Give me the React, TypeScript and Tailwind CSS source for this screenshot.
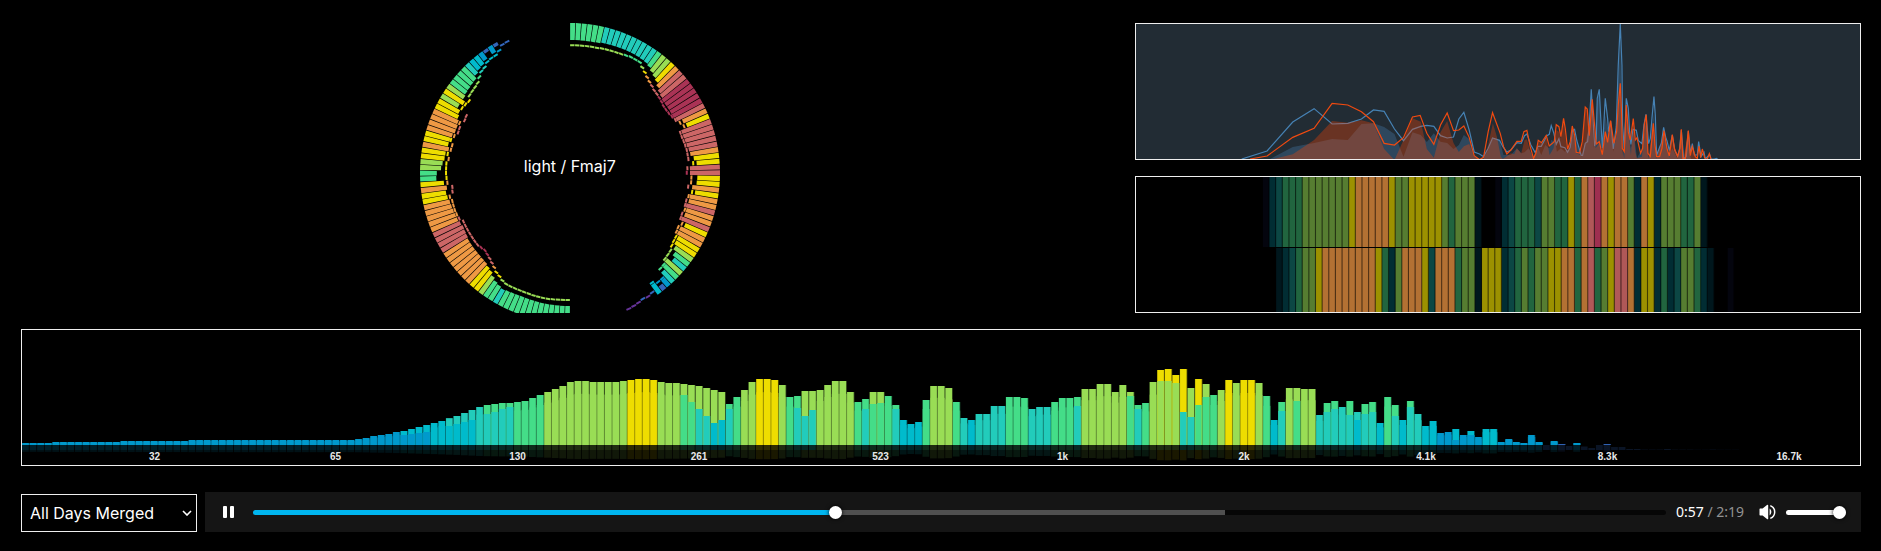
import { useState } from "react";

const PALETTE = [
  "#663399", "#3366bb", "#0099cc", "#00bbcc", "#22ccbb", "#44dd88",
  "#99dd55", "#eedd00", "#ee9944", "#cc6666", "#aa3355", "#881177",
];

/* ---------- radial analyser ---------- */

const RADIUS = 150;
const RADIAL_BANDS = 81;
const RADIAL_STEP = Math.PI / RADIAL_BANDS;

const RIGHT_BARS = [
  17, 17, 17, 17, 17, 16.8, 15.9, 15.8, 15.6, 15.4, 15.2, 15, 15, 15.2, 15.5, 15.9,
  17.5, 20, 22, 24, 27, 29.5, 31, 32.5, 32.5, 32.5, 32.5, 32.5, 31, 26, 24, 31,
  31, 30.5, 30, 29, 28.2, 25.4, 23, 30, 30, 22.6, 23, 27, 23.5, 28, 28, 29.5,
  28, 28, 29.5, 24, 27, 27, 24.5, 24, 21.5, 18.5, 15.5, 20.5, 18, 15, 9, 6,
  11.5,
];
const RIGHT_PEAKS = [
  21.2, 21.2, 21.2, 21, 21, 21, 20.5, 20.3, 20, 19.8, 19.5, 18.8, 18, 18, 18, 21,
  23.5, 26, 28, 29.5, 31, 31.6, 32.3, 33, 34, 34, 33.5, 32.5, 31, 28, 25.8, 31.5,
  31.5, 31, 30.5, 30, 30, 29.8, 25.4, 31.5, 32.2, 27.5, 27.5, 30, 25.4, 28.2, 29.5, 29.5,
  28.5, 29.8, 29.5, 26, 28, 27.5, 25.4, 25, 24, 22, 21.5, 21, 18, 17.5, 9, 8.8,
  12, 4, 2.8, 3.6, 2.4, 1.6, 1,
];
const LEFT_BARS = [
  17, 17, 17, 17, 17, 17.1, 17.2, 17.3, 17.4, 17.5, 17.3, 17, 16.6, 15.8, 17, 18.5,
  21, 24, 25.4, 27, 27.5, 27.8, 28, 28, 28.2, 28.4, 29.5, 30, 30.5, 29.5, 28.4, 28,
  27.5, 27, 26.5, 25.2, 24.5, 26, 23.5, 16.2, 16.8, 21, 22.2, 23.7, 24, 26.5, 25, 25.4,
  26.5, 28, 28, 27, 25, 23.5, 20, 23, 20, 18.8, 18.2, 17.6, 17, 14, 12, 11,
  8.8, 3.4, 8, 3.4,
];
const LEFT_PEAKS = [
  22, 22, 21.8, 21.5, 21.2, 21.2, 21.2, 21.2, 21.4, 21.4, 21.4, 21.2, 21, 21, 22, 24,
  25.4, 28, 30, 31.8, 33, 34, 33, 31.9, 31.9, 31.9, 31.9, 31.9, 31.9, 31.9, 29.2, 28.4,
  28, 28, 28, 26.5, 30, 30.5, 26, 25.4, 25, 25, 25, 26.8, 25.2, 27.6, 28, 25.4,
  27.5, 30, 29.8, 27.8, 31.2, 30.6, 23, 24, 25, 22, 21.5, 21, 20, 17, 14.2, 13.2,
  10.5, 9.8, 9.8, 7.5, 4, 3.4,
];

const paletteColor = (v: number) => PALETTE[Math.max(0, Math.min(11, Math.floor(v / 3.2)))];

function wedge(index: number, outer: number, inner: number, offset: number) {
  const a0 = offset + index * RADIAL_STEP + 0.001;
  const a1 = offset + (index + 1) * RADIAL_STEP - 0.0035;
  const pt = (r: number, a: number) => `${(r * Math.sin(a)).toFixed(2)} ${(-r * Math.cos(a)).toFixed(2)}`;
  return `M${pt(outer, a0)}L${pt(outer, a1)}L${pt(inner, a1)}L${pt(inner, a0)}Z`;
}

function RadialChannel({ bars, peaks, offset }: { bars: number[]; peaks: number[]; offset: number }) {
  return (
    <g>
      {bars.map((v, i) => (
        <path key={`b${i}`} d={wedge(i, RADIUS, RADIUS - v, offset)} fill={paletteColor(v)} />
      ))}
      {peaks.map((v, i) => (
        <path key={`p${i}`} d={wedge(i, RADIUS - v, RADIUS - v - 2, offset)} fill={paletteColor(v)} />
      ))}
    </g>
  );
}

function RadialAnalyser() {
  return (
    <div className="col-span-3 row-span-2 grid place-items-center">
      <svg viewBox="-150 -150 300 290" className="col-start-1 row-start-1 h-[290px] w-[300px]" aria-hidden="true">
        <RadialChannel bars={RIGHT_BARS} peaks={RIGHT_PEAKS} offset={0} />
        <RadialChannel bars={LEFT_BARS} peaks={LEFT_PEAKS} offset={Math.PI} />
      </svg>
      <h1 className="col-start-1 row-start-1 pb-1 text-base leading-6 text-white">light / Fmaj7</h1>
    </div>
  );
}

/* ---------- line graph ---------- */

const BLUE_LINE =
  "335,432 411,408 488,321 552,281 606,327 653,325 694,312 730,285 762,289 793,342 820,377 847,343 872,334 890,331 911,334 931,362 951,369 970,366 986,312 1001,292 1017,345 1032,411 1048,417 1060,425 1074,400 1087,369 1108,376 1118,395 1130,411 1142,405 1160,383 1173,385 1183,362 1190,357 1202,390 1215,413 1223,394 1233,394 1250,362 1257,358 1263,332 1271,355 1278,388 1286,371 1292,395 1304,398 1312,412 1320,397 1327,345 1333,343 1340,378 1353,421 1357,421 1365,385 1372,380 1377,330 1383,223 1393,393 1398,370 1401,250 1407,223 1416,400 1420,340 1425,250 1432,310 1435,350 1441,318 1449,402 1458,335 1464,150 1470,27 1475,150 1477,330 1482,400 1488,250 1494,280 1498,350 1502,388 1508,343 1518,346 1524,376 1535,386 1541,330 1547,298 1555,386 1560,370 1565,310 1571,245 1575,300 1579,421 1588,397 1593,385 1600,337 1607,370 1610,377 1617,407 1626,360 1633,405 1642,424 1648,400 1653,345 1660,432 1668,424 1674,348 1680,415 1686,386 1692,420 1701,420 1705,380 1712,425 1721,412 1725,432 1738,418 1742,432 1752,432 1758,430 1762,432";
const ORANGE_LINE =
  "360,432 411,423 488,367 552,340 606,265 653,270 694,290 730,320 762,385 793,390 820,368 847,306 870,301 890,355 911,388 931,330 951,294 970,347 986,345 1001,333 1017,367 1032,422 1048,434 1060,427 1074,350 1087,293 1110,355 1120,395 1130,417 1142,405 1160,379 1173,379 1181,350 1190,346 1200,395 1210,430 1217,415 1224,376 1234,383 1248,361 1257,393 1272,380 1278,329 1286,335 1292,365 1300,310 1305,340 1312,402 1320,380 1326,333 1333,360 1338,412 1348,414 1356,380 1365,276 1371,282 1377,362 1386,253 1393,330 1398,387 1407,380 1416,419 1425,350 1432,382 1441,317 1451,385 1459,350 1464,270 1470,205 1474,300 1476,400 1482,410 1488,270 1494,350 1500,375 1509,311 1515,375 1520,368 1531,415 1537,400 1542,330 1548,299 1553,415 1560,424 1565,370 1569,325 1574,390 1579,425 1588,424 1595,400 1601,347 1610,400 1617,423 1626,359 1633,403 1642,424 1649,400 1653,343 1658,432 1665,432 1674,347 1680,422 1686,395 1695,425 1701,430 1706,393 1711,428 1716,402 1723,428 1730,435 1737,416 1742,432";
const BLUE_FILL =
  "420,432 488,396 552,384 606,372 653,375 694,327 730,325 762,336 793,357 820,425 847,352 872,360 890,381 911,355 931,380 951,384 970,402 986,390 1001,360 1017,372 1032,420 1048,432 1060,430 1074,405 1087,369 1108,376 1120,420 1142,420 1160,400 1173,415 1183,412 1195,400 1210,425 1223,395 1233,420 1245,390 1257,400 1263,375 1275,380 1280,410 1292,400 1304,410 1320,400 1327,345 1340,385 1353,425 1365,385 1377,340 1383,240 1390,400 1401,260 1407,230 1414,420 1425,300 1432,340 1441,330 1449,410 1458,345 1464,200 1470,80 1477,420 1488,270 1498,360 1502,400 1510,345 1520,430 1535,400 1547,320 1555,430 1565,340 1571,290 1577,430 1600,360 1617,420 1626,400 1642,432 1653,370 1660,432 1674,370 1682,432";
const ORANGE_FILL =
  "430,432 488,418 552,375 606,318 653,323 694,316 730,325 762,402 793,435 820,375 847,310 872,320 890,402 911,428 931,352 951,318 970,384 986,411 1001,394 1017,387 1032,425 1048,432 1060,432 1074,390 1088,325 1100,365 1112,425 1118,432 1142,415 1152,418 1160,400 1173,415 1183,375 1190,373 1202,415 1210,430 1225,380 1240,385 1248,362 1258,420 1270,400 1278,345 1286,350 1292,370 1300,315 1310,405 1320,380 1327,335 1338,415 1350,420 1356,385 1365,280 1371,285 1376,365 1386,260 1396,400 1407,385 1416,420 1425,355 1432,385 1441,320 1451,400 1459,360 1464,280 1470,210 1475,400 1482,430 1488,275 1495,350 1502,420 1509,320 1515,410 1520,430 1535,425 1547,300 1555,432 1569,330 1579,432 1601,350 1617,430 1626,365 1642,430 1653,350 1659,432 1674,350 1680,425 1687,400 1700,432";

function LineGraph() {
  return (
    <div className="col-span-2 h-[137px] border border-[#eeeeee] bg-[#222c34]">
      <svg viewBox="18 27 2172 405" preserveAspectRatio="none" className="block h-full w-full" aria-hidden="true">
        <polygon points={BLUE_FILL} fill="#4682b4" fillOpacity="0.32" />
        <polyline points={BLUE_LINE} fill="none" stroke="#4682b4" strokeWidth="1.2" vectorEffect="non-scaling-stroke" />
        <polygon points={ORANGE_FILL} fill="#ff4500" fillOpacity="0.32" />
        <polyline points={ORANGE_LINE} fill="none" stroke="#f04a10" strokeWidth="1.2" vectorEffect="non-scaling-stroke" />
      </svg>
    </div>
  );
}

/* ---------- luminance bars ---------- */

const LUMI: Record<string, string> = {
  n: "#04050e", D: "#00171d", d: "#012d33", t: "#0c4744", g: "#21653f",
  l: "#567d31", y: "#9c9100", o: "#b37133", p: "#b05858", c: "#9e2f50",
};
const LUMI_LEFT = "ndtggglllllllyoooooyllyyyyylglllDkkndtgggtllggygopcoyooldoydlllgglD";
const LUMI_RIGHT = "kkDdtgllyooooooooygdloooytooogllDyyydtglgllyyoogopglyppodyydgdtllgdDkkn";

function LumiRow({ data, y, height }: { data: string; y: number; height: number }) {
  return (
    <g>
      {data.split("").map((c, i) =>
        LUMI[c] ? (
          <g key={i} fill={LUMI[c]}>
            <rect x={398 + i * 19.91} y={y} width="19.9" height={height} fillOpacity="0.45" />
            <rect x={398.5 + i * 19.91} y={y} width="16.6" height={height} />
          </g>
        ) : null,
      )}
    </g>
  );
}

function LumiBars() {
  return (
    <div className="col-span-2 h-[137px] border border-[#eeeeee]">
      <svg viewBox="18 21 2172 405" preserveAspectRatio="none" className="block h-full w-full" aria-hidden="true">
        <LumiRow data={LUMI_LEFT} y={21} height={210} />
        <LumiRow data={LUMI_RIGHT} y={234} height={192} />
      </svg>
    </div>
  );
}

/* ---------- main spectrum ---------- */

// Each entry is the height of the louder channel, or [louder, quieter].
type Band = number | [number, number];
const rep = (v: number, n: number): Band[] => Array.from({ length: n }, () => v);

const BANDS: Band[] = [
  ...rep(2, 4), ...rep(3, 9), ...rep(4, 9), ...rep(5, 22),
  6, 7, 9, 10, 11, 13, [14, 10], [16, 11], [18, 12], [20, 13], 22, 24,
  [26.8, 19], [29, 21], [32, 23], [35, 25], 38,
  [40, 31], [41, 33], [42, 36], [42, 38], 43, 44, 47, 50, 53, 56, 59, 63, 64, 64,
  63, 63, 63, 63, 64, 65, 66, 66, 65, 63, 62, 62, [61, 50], [60, 43], [59, 36], [57, 29],
  [55, 22], [53, 25], [41, 36], 48, 55, 63, 66, 66, 65, 60, 48, [49, 37], [54, 29], [54, 35],
  55, 60, 64, 64, 53, 43, [46, 36], [53, 41], [53, 42], 49, [40, 36], 25, 21, 23, 45,
  59, 59, 57, 43, 27, 25, 31, 31, 39, 39, 48, 48, 47, 36, 38, 38, 43, 47, 47, [48, 39],
  56, 56, 61, 61, 53, 60, [53, 49], [40, 36], 42, 63, [75, 64], [76, 64], [70, 62], [76, 33],
  [57, 28], [66, 40], [61, 48], 50, 55, 65, 62, 65, 65, 62, 49, 25, [43, 34], 57, [57, 44],
  56, 56, 30, [42, 33], [44, 36], 38, [44, 30], [33, 25], [41, 31], [43, 33], 22, 48, [40, 29],
  25, [44, 38], 31, 19, 24, 12, 13, [16, 5], 10, [14, 10], 8, 16, 16, 3, 6, 3, 2, 10, 3,
  0, 4, 0.9, -1, 2, -1.5, -3, 0, 0.9, -2, -2, -4, -4, -4.6, -4.6, -4.6, -4, -4.7, -4.7, -4.7,
  -4.8, -4.8, -4.6, -4.8, -4.8, -4.8,
];
const PITCH = 7.567;
const BASE = 115;

function bandColor(h: number) {
  const limits = [1, 13.6, 25.8, 39.4, 52.2, 64.5];
  const k = limits.filter((l) => h >= l).length;
  return PALETTE[1 + k];
}

function SpectrumBand({ band, index }: { band: Band; index: number }) {
  const [hi, lo] = Array.isArray(band) ? band : [band, band];
  const x = index * PITCH;
  const w = PITCH - 0.75;
  const hiColor = bandColor(hi);
  const loColor = bandColor(lo);
  const strip = hi === lo ? Math.max(0, hi * 0.8) : lo;
  const reflection = hi > 0 ? 1.6 + hi * 0.115 : 0;
  return (
    <g>
      {hi > 0 && (
        <>
          <rect x={x} y={BASE - hi} width={PITCH} height={hi} fill={hiColor} fillOpacity="0.4" />
          <rect x={x} y={BASE - strip} width={PITCH} height={strip} fill={loColor} fillOpacity="0.5" />
          <rect x={x + 0.3} y={BASE - hi} width={w - 0.3} height={hi} fill={hiColor} />
          {lo < hi && <rect x={x + 0.3} y={BASE - lo} width={w - 0.3} height={lo} fill={loColor} />}
        </>
      )}
      <rect x={x} y={BASE - Math.min(0, hi)} width={w} height={5 + Math.min(0, hi)} fill={loColor} fillOpacity="0.2" />
      <rect x={x} y={BASE + 5} width={w} height={reflection} fill={hiColor} fillOpacity="0.11" />
    </g>
  );
}

const SCALE = [
  { label: "32", at: 132.5 }, { label: "65", at: 313.5 }, { label: "130", at: 495.5 },
  { label: "261", at: 677 }, { label: "523", at: 858.5 }, { label: "1k", at: 1040.5 },
  { label: "2k", at: 1222 }, { label: "4.1k", at: 1404 }, { label: "8.3k", at: 1585.5 },
  { label: "16.7k", at: 1767 },
];

function Spectrum() {
  return (
    <div className="relative col-span-5 h-[137px] border border-[#eeeeee]">
      <svg viewBox="0 0 1838 135" preserveAspectRatio="none" className="block h-full w-full" aria-hidden="true">
        {BANDS.map((b, i) => (
          <SpectrumBand key={i} band={b} index={i} />
        ))}
      </svg>
      {SCALE.map(({ label, at }) => (
        <span
          key={label}
          className="absolute bottom-0.5 -translate-x-1/2 font-[family-name:'Liberation_Sans',Arial,sans-serif] text-[10px] leading-3 font-bold text-[#e8e8e8]"
          style={{ left: `${(at / 1838) * 100}%` }}
        >
          {label}
        </span>
      ))}
    </div>
  );
}

/* ---------- controls ---------- */

const RANGE =
  "block h-[5px] cursor-pointer appearance-none rounded-full [&::-webkit-slider-thumb]:size-[13px] [&::-webkit-slider-thumb]:appearance-none [&::-webkit-slider-thumb]:rounded-full [&::-webkit-slider-thumb]:bg-white [&::-webkit-slider-thumb]:shadow-[0_0_4px_#000]";

function Player() {
  const [time, setTime] = useState(57.15);
  const [volume, setVolume] = useState(100);
  const duration = 139;
  const clock = (t: number) => {
    const s = Math.floor(t);
    return `${Math.floor(s / 60)}:${String(s % 60).padStart(2, "0")}`;
  };
  const played = (time / duration) * 100;
  return (
    <div className="flex h-10 min-w-0 flex-1 items-center bg-[#151515] pr-[15px] pl-[18px]">
      <button type="button" aria-label="Pause" className="shrink-0">
        <svg viewBox="0 0 12 12" className="block size-3" fill="#fff">
          <rect x="0" y="0" width="4" height="12" rx="1" />
          <rect x="7" y="0" width="4" height="12" rx="1" />
        </svg>
      </button>
      <input
        type="range"
        aria-label="Position"
        min={0}
        max={duration}
        step="any"
        value={time}
        onChange={(e) => setTime(Number(e.target.value))}
        className={`${RANGE} ml-[18px] min-w-0 flex-1`}
        style={{
          background: `linear-gradient(to right, #00b6f0 ${played}%, #505050 ${played}%, #505050 68.8%, #060606 68.8%)`,
        }}
      />
      <span className="ml-2.5 w-[68px] shrink-0 font-[family-name:'Noto_Sans',sans-serif] text-sm whitespace-nowrap text-white">
        {clock(time)} <span className="text-[#929292]">/ {clock(duration)}</span>
      </span>
      <button type="button" aria-label="Mute" className="ml-[15px] shrink-0">
        <svg viewBox="0 0 17 16" className="block h-4 w-[17px]">
          <path d="M0.5 5.2Q0.5 4.6 1.1 4.6H3.6L8 0.9Q9.2 0.3 9.2 1.6V14.4Q9.2 15.7 8 15.1L3.6 11.4H1.1Q0.5 11.4 0.5 10.8Z" fill="#fff" />
          <path d="M10.6 4.6Q12.4 6 12.4 8T10.6 11.4Z" fill="#fff" />
          <path d="M11.3 1.6Q15.7 3.4 15.7 8T11.3 14.4" fill="none" stroke="#fff" strokeWidth="1.5" />
        </svg>
      </button>
      <input
        type="range"
        aria-label="Volume"
        min={0}
        max={100}
        value={volume}
        onChange={(e) => setVolume(Number(e.target.value))}
        className={`${RANGE} ml-2.5 w-[60px] shrink-0`}
        style={{ background: `linear-gradient(to right, #fff ${volume}%, #505050 ${volume}%)` }}
      />
    </div>
  );
}

function DayPicker() {
  return (
    <div className="grid w-[176px] shrink-0 items-center">
      <select
        aria-label="Recording"
        className="col-start-1 row-start-1 h-[38px] w-full appearance-none border border-[#eeeeee] bg-black px-2 text-base text-white"
      >
        <option>All Days Merged</option>
      </select>
      <svg
        viewBox="0 0 10 6"
        className="pointer-events-none col-start-1 row-start-1 mr-[5px] h-1.5 w-2.5 justify-self-end"
        fill="none"
        stroke="#fff"
        strokeWidth="1.6"
        aria-hidden="true"
      >
        <path d="M1 1L5 5L9 1" />
      </svg>
    </div>
  );
}

export default function App() {
  return (
    <main className="min-h-screen bg-black pt-[23px] pr-5 pb-2 pl-[21px] font-[family-name:'Inter',sans-serif]">
      <div className="grid grid-cols-5 gap-4">
        <RadialAnalyser />
        <LineGraph />
        <LumiBars />
        <Spectrum />
      </div>
      <div className="mt-[26px] flex items-end gap-2">
        <DayPicker />
        <Player />
      </div>
    </main>
  );
}
